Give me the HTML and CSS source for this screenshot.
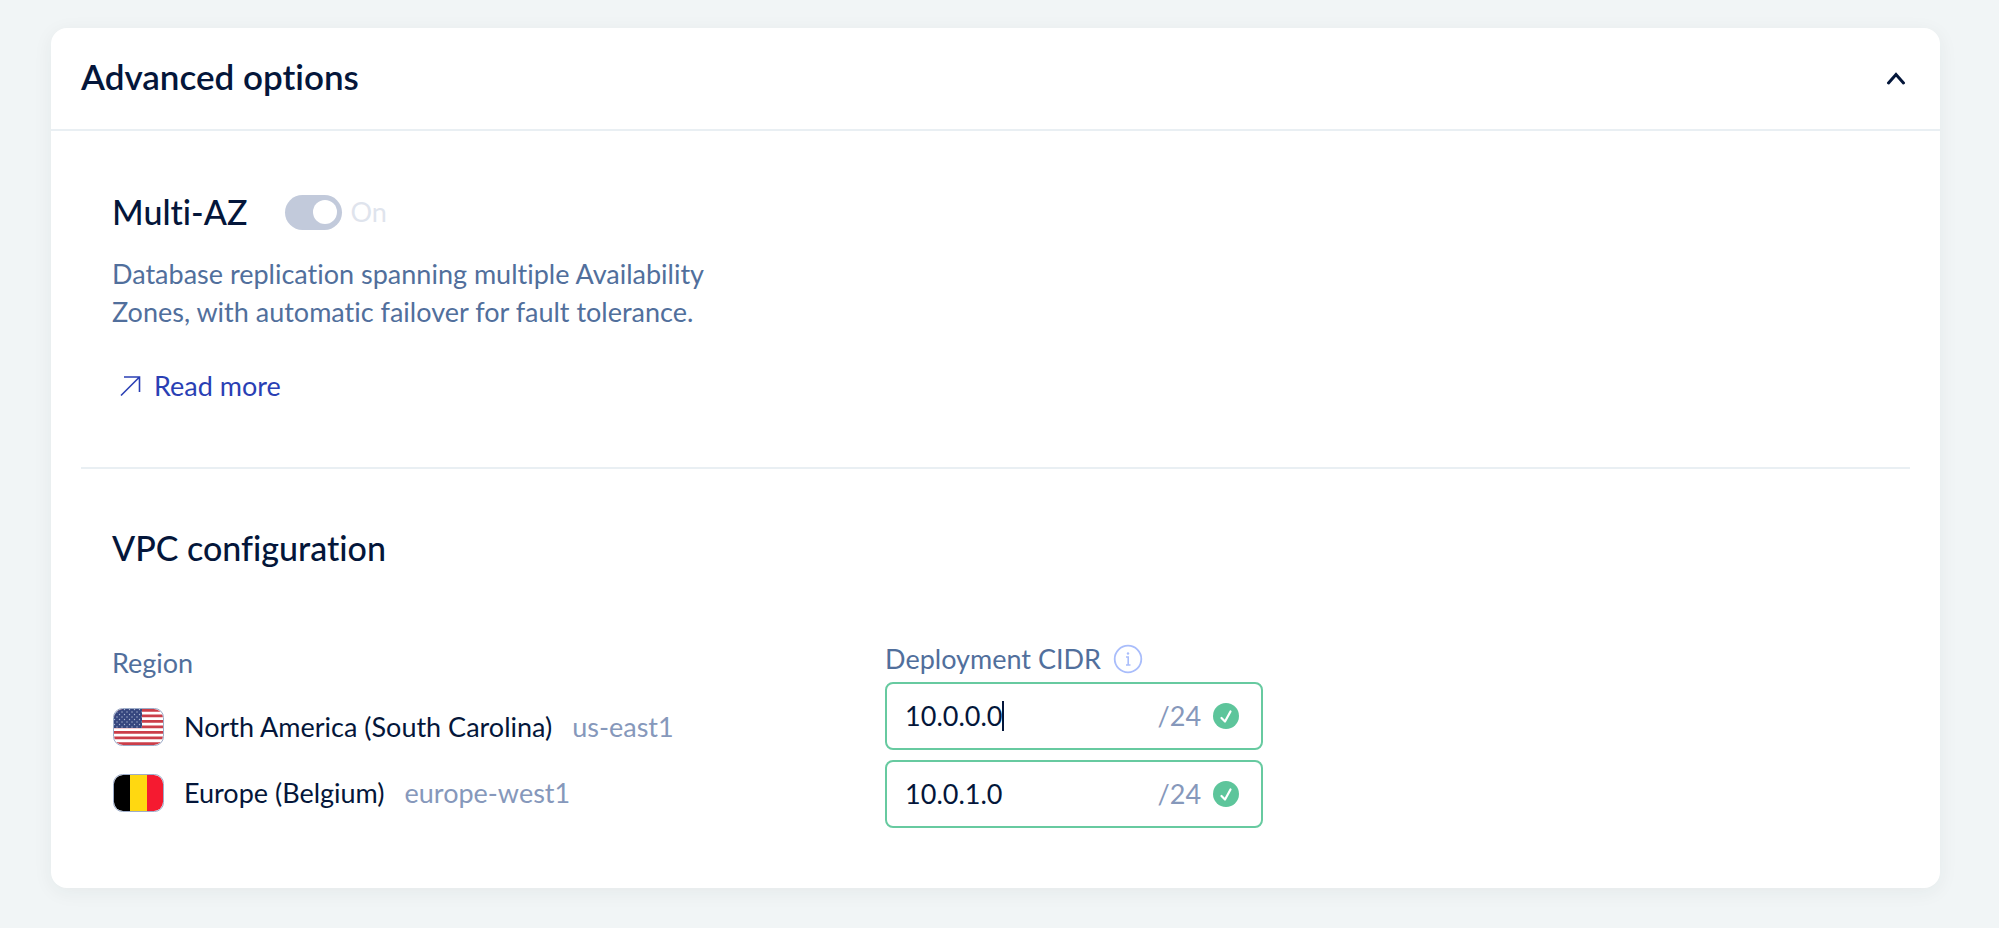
FILE: index.html
```html
<!DOCTYPE html>
<html lang="en">
<head>
<meta charset="utf-8">
<meta name="viewport" content="width=device-width, initial-scale=1">
<title>Advanced options</title>
<link rel="stylesheet" href="styles.css">
</head>
<body>
<main class="card">
  <header class="card-header">
    <h1 class="card-title">Advanced options</h1>
    <button class="collapse" type="button" aria-label="Collapse advanced options" aria-expanded="true">
      <svg width="20" height="14" viewBox="0 0 20 14" fill="none" stroke="currentColor" stroke-width="3" stroke-linecap="round" stroke-linejoin="miter"><path d="M2.500 12 10 3.500l7.500 8.500"/></svg>
    </button>
  </header>

  <div class="card-body">
    <section class="section multi-az">
      <div class="heading-row">
        <h2 class="section-title" id="multi-az-title">Multi-AZ</h2>
        <label class="toggle">
          <input class="toggle-input" type="checkbox" role="switch" checked disabled aria-labelledby="multi-az-title">
          <span>On</span>
        </label>
      </div>
      <p class="description">Database replication spanning multiple Availability<br>Zones, with automatic failover for fault tolerance.</p>
      <a class="link" href="#multi-az">
        <svg width="24" height="24" viewBox="0 0 24 24" fill="none" stroke="currentColor" stroke-width="1.600"><path d="M1 21.500 19.500 3M4 3h15.500v15"/></svg>
        <span>Read more</span>
      </a>
    </section>

    <section class="section vpc">
      <h2 class="section-title">VPC configuration</h2>
      <div class="columns">
        <div class="regions">
          <div class="label">Region</div>
          <ul class="region-list">
            <li class="region">
              <svg class="flag" width="51" height="38" viewBox="0 0 51 38" role="img" aria-label="United States">
                <defs>
                  <clipPath id="flag-shape"><rect x="1" y="1" width="49" height="36" rx="9"/></clipPath>
                  <pattern id="stars" width="5" height="5" patternUnits="userSpaceOnUse"><circle cx="1.500" cy="1.500" r=".7" fill="#a9b5d0"/><circle cx="4" cy="4" r=".7" fill="#a9b5d0"/></pattern>
                </defs>
                <g clip-path="url(#flag-shape)">
                  <path fill="#fff" d="M0 0h51v38H0z"/>
                  <path stroke="#cb3e49" stroke-width="2.800" d="M0 2.400h51M0 7.900h51M0 13.400h51M0 18.900h51M0 24.400h51M0 29.900h51M0 35.600h51"/>
                  <path fill="#36477f" d="M0 0h29v20H0z"/>
                  <path fill="url(#stars)" d="M1 1h28v19H1z"/>
                </g>
                <rect x=".5" y=".5" width="50" height="37" rx="9" fill="none" stroke="#9dacc8"/>
              </svg>
              <span class="region-name">North America (South Carolina)</span>
              <span class="region-code">us-east1</span>
            </li>
            <li class="region">
              <svg class="flag" width="51" height="38" viewBox="0 0 51 38" role="img" aria-label="Belgium">
                <g clip-path="url(#flag-shape)">
                  <path d="M0 0h17v38H0z"/>
                  <path fill="#ffd811" d="M17 0h17v38H17z"/>
                  <path fill="#f51a30" d="M34 0h17v38H34z"/>
                </g>
                <rect x=".5" y=".5" width="50" height="37" rx="9" fill="none" stroke="#9dacc8"/>
              </svg>
              <span class="region-name">Europe (Belgium)</span>
              <span class="region-code">europe-west1</span>
            </li>
          </ul>
        </div>

        <div class="cidrs">
          <div class="label cidr-label">
            <span id="cidr-label">Deployment CIDR</span>
            <button class="info" type="button" aria-label="About deployment CIDR">
              <svg width="30" height="30" viewBox="0 0 30 30" fill="none" stroke="currentColor" stroke-width="1.800"><circle cx="15" cy="15" r="13.300"/><circle cx="15" cy="9.500" r="1.200" fill="currentColor" stroke="none"/><path stroke-width="1.600" d="M13 13h2.200v8M13 21h4.500"/></svg>
            </button>
          </div>
          <div class="field">
            <input class="field-input" type="text" value="10.0.0.0" aria-labelledby="cidr-label">
            <span class="caret"></span>
            <span class="suffix">/24</span>
            <svg width="26" height="26" viewBox="0 0 26 26" fill="none"><circle cx="13" cy="13" r="13" fill="#5dc59b"/><path stroke="#fff" stroke-width="2.200" stroke-linecap="round" stroke-linejoin="round" d="m8.500 15 3.500 3.500 5.500-10"/></svg>
          </div>
          <div class="field">
            <input class="field-input" type="text" value="10.0.1.0" aria-labelledby="cidr-label">
            <span class="suffix">/24</span>
            <svg width="26" height="26" viewBox="0 0 26 26" fill="none"><circle cx="13" cy="13" r="13" fill="#5dc59b"/><path stroke="#fff" stroke-width="2.200" stroke-linecap="round" stroke-linejoin="round" d="m8.500 15 3.500 3.500 5.500-10"/></svg>
          </div>
        </div>
      </div>
    </section>
  </div>
</main>
</body>
</html>
```

FILE: styles.css
```css
* {
  box-sizing: border-box;
}

body {
  margin: 0;
  padding: 28px 59px 40px 51px;
  background: #f1f5f6;
  color: #04163a;
  font-family: Lato, "Noto Sans", sans-serif;
  font-size: 27px;
  line-height: 38px;
  font-variant-ligatures: no-common-ligatures;
}

h1, h2, p, ul {
  margin: 0;
  padding: 0;
}

svg {
  display: block;
  flex: none;
}

.card {
  background: #fff;
  border-radius: 16px;
  box-shadow: 0 4px 20px rgba(30, 50, 50, 0.06);
}

.card-header {
  display: flex;
  align-items: center;
  justify-content: space-between;
  padding: 26px 30px 30px;
  border-bottom: 2px solid #e9eff3;
}

.card-title {
  font-size: 35px;
  line-height: 45px;
  font-weight: 600;
}

.collapse {
  padding: 6px 4px 4px;
  border: 0;
  background: none;
  color: inherit;
}

.card-body {
  padding: 0 30px;
}

.section {
  padding: 58px 31px 60px;
}

.section + .section {
  border-top: 2px solid #e9eff3;
}

.section.vpc {
  padding-top: 56px;
  padding-bottom: 50px;
}

.section-title {
  font-size: 34px;
  line-height: 46px;
  font-weight: 500;
}

.heading-row {
  display: flex;
  align-items: center;
  gap: 38px;
}

.toggle {
  display: flex;
  align-items: center;
  gap: 8px;
  color: #dfe4ed;
}

.toggle-input {
  appearance: none;
  width: 57px;
  height: 35px;
  margin: 0;
  padding: 5px;
  border-radius: 18px;
  background: #c2cadb;
}

.toggle-input::before {
  content: "";
  display: block;
  width: 24px;
  height: 24px;
  margin-left: auto;
  border-radius: 50%;
  background: #fff;
}

.description {
  margin-top: 20px;
  color: #516f9c;
}

.link {
  display: inline-flex;
  align-items: center;
  gap: 10px;
  margin-top: 36px;
  padding-left: 8px;
  color: #2a3fb4;
  text-decoration: none;
}

.columns {
  display: grid;
  grid-template-columns: 7fr 9fr;
  margin-top: 69px;
}

.label {
  color: #516f9c;
}

.regions {
  padding-top: 4px;
}

.region-list {
  display: grid;
  gap: 28px;
  margin-top: 26px;
  list-style: none;
}

.region {
  display: flex;
  align-items: center;
  gap: 20px;
}

.flag {
  margin-left: 1px;
}

.region-code,
.suffix {
  color: #8698bb;
}

.cidr-label {
  display: flex;
  align-items: center;
  gap: 12px;
}

.info {
  padding: 0;
  border: 0;
  background: none;
  color: #a9bdfb;
}

.field {
  position: relative;
  display: flex;
  align-items: center;
  gap: 12px;
  max-width: 378px;
  height: 68px;
  margin-bottom: 10px;
  padding: 0 22px 0 18px;
  border: 2px solid #67caa0;
  border-radius: 8px;
}

.cidr-label + .field {
  margin-top: 4px;
}

.field-input {
  flex: 1;
  min-width: 0;
  padding: 0;
  border: 0;
  outline: 0;
  background: none;
  color: inherit;
  font: inherit;
}

.caret {
  position: absolute;
  left: 115px;
  width: 2px;
  height: 30px;
  background: #04163a;
}
```
